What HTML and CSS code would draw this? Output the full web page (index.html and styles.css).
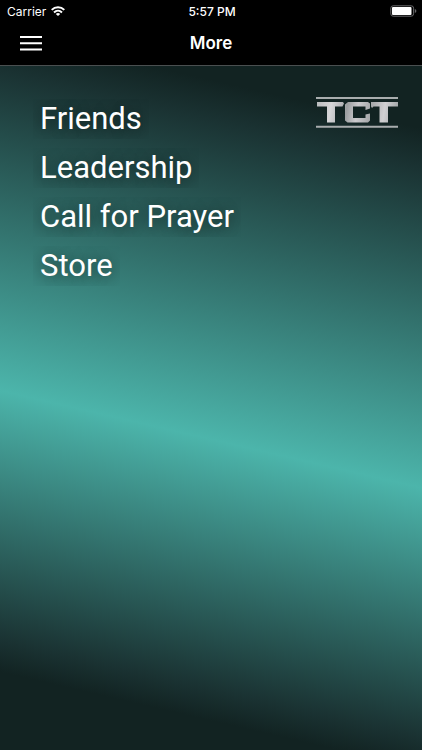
FILE: index.html
```html
<!DOCTYPE html>
<html lang="en">
<head>
<meta charset="utf-8">
<meta name="viewport" content="width=device-width, initial-scale=1">
<title>More</title>
<link rel="stylesheet" href="styles.css">
</head>
<body>
<header class="top">
  <div class="status">
    <div class="carrier">
      <span>Carrier</span>
      <svg class="wifi" viewBox="0 0 14 10" aria-hidden="true">
        <path d="M.7 3.9C4.2.5 9.8.5 13.3 3.9" />
        <path d="M3 6.4C5.3 4.3 8.7 4.3 11 6.4" />
        <path class="dot" d="M4.8 7.9Q7 6.3 9.2 7.9L7 10Z" />
      </svg>
    </div>
    <time class="clock">5:57 PM</time>
    <svg class="battery" viewBox="0 0 27 12" aria-hidden="true">
      <rect class="case" x=".8" y=".8" width="22.8" height="10.4" rx="2.4" />
      <rect class="charge" x="2" y="2" width="19.5" height="8" rx="1" />
      <path class="cap" d="M24.8 4v4q1.6-.6 1.6-2t-1.6-2Z" />
    </svg>
  </div>
  <nav class="bar">
    <button class="menu" type="button" aria-label="Menu">
      <svg viewBox="0 0 22 16" aria-hidden="true"><path d="M0 2h22M0 8.200h22M0 14.400h22" /></svg>
    </button>
    <h1 class="title">More</h1>
  </nav>
</header>
<main class="content">
  <ul class="links">
    <li><a href="#friends">Friends</a></li>
    <li><a href="#leadership">Leadership</a></li>
    <li><a href="#prayer">Call for Prayer</a></li>
    <li><a href="#store">Store</a></li>
  </ul>
  <svg class="logo" viewBox="0 0 82 32" role="img" aria-label="TCT">
    <defs>
      <linearGradient id="metal" gradientUnits="userSpaceOnUse" x1="0" y1="8" x2="82" y2="22">
        <stop offset="0" stop-color="#b9bbbd" />
        <stop offset=".18" stop-color="#d6d6d8" />
        <stop offset=".3" stop-color="#b6b7ba" />
        <stop offset=".37" stop-color="#9b9ea0" />
        <stop offset=".5" stop-color="#cccbce" />
        <stop offset=".66" stop-color="#a6a8aa" />
        <stop offset=".82" stop-color="#d0d0d2" />
        <stop offset="1" stop-color="#9da1a3" />
      </linearGradient>
    </defs>
    <path class="rule" d="M0 1h82M0 29.700h82" />
    <g fill="url(#metal)">
      <path d="M1 5h26l1 1.500-1.500 3H19v16h-8v-16H1Z" />
      <path d="M32 5h20l2 1.500v5l-4.500 1.500V9.500H37V21h12.500v-3.500l4.500-1v7l-2 2H31.500l-2.500-2V7.500Z" />
      <path d="M55 5h27v4.500h-10v16h-8.500v-16h-6L56 11l-1-1.500Z" />
    </g>
  </svg>
</main>
</body>
</html>
```
FILE: styles.css
```css
* {
  box-sizing: border-box;
}

body {
  margin: 0;
  min-height: 100vh;
  display: flex;
  flex-direction: column;
  background: #000;
  color: #fff;
  font-family: Inter, "Liberation Sans", sans-serif;
}

.top {
  border-bottom: 1px solid #4a4f50;
}

.status {
  display: grid;
  grid-template-columns: 1fr auto 1fr;
  align-items: center;
  height: 22px;
  padding: 0 5px 0 7px;
  font-size: 12px;
}

.carrier {
  display: flex;
  align-items: center;
  gap: 5px;
}

.wifi {
  width: 14px;
  height: 10px;
  fill: none;
  stroke: #fff;
  stroke-width: 2;
}

.wifi .dot {
  fill: #fff;
  stroke: none;
}

.clock {
  font-weight: 500;
}

.battery {
  justify-self: end;
  width: 27px;
  height: 12px;
}

.case {
  fill: none;
  stroke: #68686a;
  stroke-width: 1;
}

.charge {
  fill: #fff;
}

.cap {
  fill: #68686a;
}

.bar {
  display: grid;
  grid-template-columns: 1fr auto 1fr;
  align-items: center;
  height: 43px;
  padding: 0 20px 2px;
}

.menu {
  justify-self: start;
  display: flex;
  padding: 0;
  border: 0;
  background: none;
}

.menu svg {
  width: 22px;
  height: 16px;
  stroke: #fff;
  stroke-width: 2;
}

.title {
  margin: 0;
  font-size: 17px;
  font-weight: 600;
}

.content {
  flex: 1;
  display: flex;
  justify-content: space-between;
  align-items: flex-start;
  padding: 31px 24px 24px 33px;
  background: linear-gradient(193deg, #122322 8%, #1a3232 13%, #4cb5ab 54%, #1a3232 86%, #122322 90%);
}

.links {
  display: grid;
  gap: 9px;
  margin: 0;
  padding: 2px 0 0;
  list-style: none;
}

.links li {
  display: flex;
}

.links a {
  padding: 0 7px;
  overflow: hidden;
  color: #fff;
  font-family: Roboto, "Liberation Sans", sans-serif;
  font-size: 31px;
  line-height: 40px;
  text-decoration: none;
  text-shadow: 0 2px 16px rgba(0, 0, 0, 0.6);
}

.logo {
  width: 82px;
  height: 32px;
}

.rule {
  stroke: #a9adae;
  stroke-width: 2;
}
```
